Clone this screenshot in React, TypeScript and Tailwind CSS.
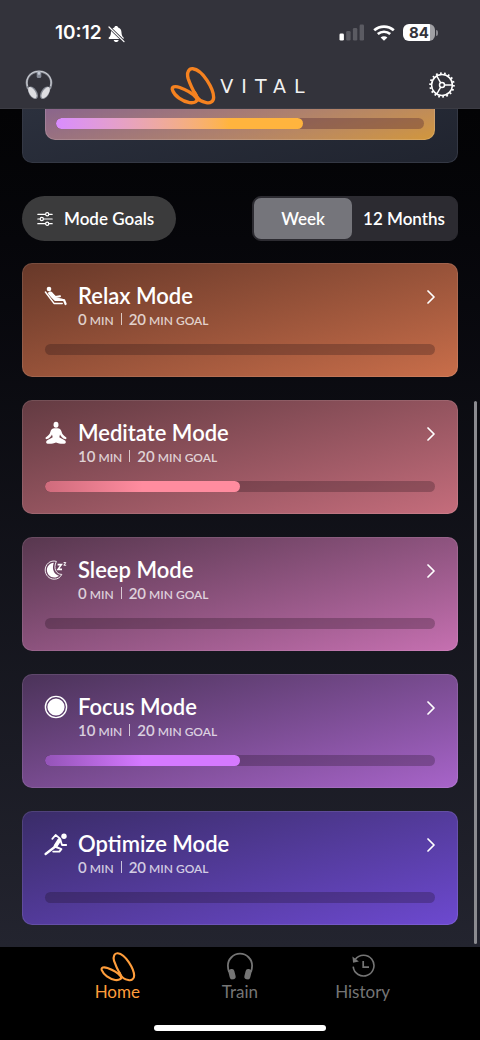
import { useState, type ReactNode } from "react";

type Mode = {
  name: string;
  minutes: number;
  goal: number;
  card: string;
  fill: string;
  icon: ReactNode;
};

function Leaves({ className, stroke }: { className: string; stroke: number }) {
  return (
    <svg viewBox="25 15 140 116" className={className} fill="none" stroke="currentColor" strokeWidth={stroke} aria-hidden="true">
      <path d="M82 52C77 34 84 22 96 23C126 26 158 84 158 108C158 121 148 127 136 124C124 122 112 115 106 104C97 88 88 70 82 52Z" />
      <path d="M36 88C30 76 44 74 57 79C76 86 96 97 106 109C114 119 102 126 86 124C64 120 42 104 36 88Z" />
      <path d="M100 92C108 103 112 110 108 120" />
    </svg>
  );
}

function BellOff() {
  return (
    <svg viewBox="0 0 17 18" className="h-[18px] w-[17px]" aria-hidden="true">
      <path d="M8.2 1C9.4 1 10 1.7 10.1 2.5C12.4 3.2 13.4 5 13.5 7.4C13.6 10 14.3 11.2 15.6 12.6C16 13.3 15.7 14 15 14H1.4C.7 14 .4 13.3.8 12.6C2.2 11.2 2.8 10 2.9 7.4C3 5 4 3.2 6.3 2.5C6.4 1.7 7 1 8.2 1Z" fill="#fff" />
      <path d="M5.7 15H10.7C10.3 16.4 9.4 17 8.2 17C7 17 6.1 16.4 5.7 15Z" fill="#fff" />
      <path d="M1 2L16 16.6" stroke="#33333b" strokeWidth="2.8" />
      <path d="M1 2L16 16.6" stroke="#fff" strokeWidth="1.3" strokeLinecap="round" />
    </svg>
  );
}

function Signal() {
  return (
    <svg viewBox="0 0 26 17" className="h-[17px] w-[26px]" fill="#5b5b62" aria-hidden="true">
      <rect x="0.5" y="9.5" width="4.4" height="7" rx="1.3" fill="#fff" />
      <rect x="7.2" y="7" width="4.4" height="9.5" rx="1.3" />
      <rect x="13.9" y="4" width="4.4" height="12.5" rx="1.3" />
      <rect x="20.6" y="0.6" width="4.4" height="15.9" rx="1.3" />
    </svg>
  );
}

function Wifi() {
  return (
    <svg viewBox="0 0 22 16" className="h-4 w-[22px]" fill="none" stroke="#fff" strokeWidth="2.7" aria-hidden="true">
      <path d="M1.2 5.2C6.8 .3 15.2 .3 20.8 5.2" />
      <path d="M4.8 9C8.4 6 13.6 6 17.2 9" />
      <path d="M11 15.8L7.6 12.4C9.5 10.7 12.5 10.7 14.4 12.4Z" fill="#fff" stroke="none" />
    </svg>
  );
}

function Headset() {
  return (
    <svg viewBox="0 0 28 30" className="h-[30px] w-7" fill="none" aria-hidden="true">
      <path d="M3.2 19C-.8 10 4.2 1.7 14 1.7C23.8 1.7 28.8 10 24.8 19" stroke="#8d9099" strokeWidth="2.2" />
      <path d="M2.4 16C0 9 5 1.2 14 1.2C23 1.2 28 9 25.6 16" stroke="#d5d7dc" strokeWidth="0.9" />
      <rect x="11.7" y="1.4" width="4.6" height="6.6" rx="1.6" fill="#858a96" />
      <rect x="12.7" y="1.4" width="2.6" height="3.4" rx="1" fill="#c3c8d3" />
      <ellipse cx="8" cy="22.8" rx="4" ry="7" transform="rotate(-32 8 22.8)" fill="#868a94" />
      <ellipse cx="7.4" cy="22.6" rx="3" ry="6.4" transform="rotate(-32 7.4 22.6)" fill="#dedee2" />
      <ellipse cx="20" cy="22.8" rx="4" ry="7" transform="rotate(32 20 22.8)" fill="#868a94" />
      <ellipse cx="20.6" cy="22.6" rx="3" ry="6.4" transform="rotate(32 20.6 22.6)" fill="#dedee2" />
    </svg>
  );
}

function Gear() {
  return (
    <svg viewBox="0 0 26 26" className="size-[26px]" fill="none" stroke="#fff" aria-hidden="true">
      <circle cx="13" cy="13" r="10.4" strokeWidth="1.5" />
      <circle cx="13" cy="13" r="11.8" strokeWidth="2" pathLength="54" strokeDasharray="1.3 1.7" />
      <circle cx="13" cy="13" r="2.5" strokeWidth="1.5" />
      <path d="M15.5 13H23.4M11.7 10.8L7.8 4M11.7 15.2L7.8 22" strokeWidth="1.5" />
    </svg>
  );
}

function Sliders() {
  return (
    <svg viewBox="0 0 16 14" className="h-3.5 w-4" fill="none" stroke="#fff" strokeWidth="1.2" strokeLinecap="round" aria-hidden="true">
      <path d="M.8 2.3H8.4M12 2.3H15.2M.8 7H3M6.6 7H15.2M.8 11.7H8.4M12 11.7H15.2" />
      <circle cx="10.2" cy="2.3" r="1.6" />
      <circle cx="4.8" cy="7" r="1.6" />
      <circle cx="10.2" cy="11.7" r="1.6" />
    </svg>
  );
}

function Chevron() {
  return (
    <svg viewBox="0 0 8 14" className="h-3.5 w-2" fill="none" stroke="#fff" strokeWidth="1.7" strokeLinecap="round" strokeLinejoin="round" aria-hidden="true">
      <path d="M1 1L7 7L1 13" />
    </svg>
  );
}

const reclining = (
  <svg viewBox="0 0 24 24" className="size-6" fill="none" stroke="#fff" strokeLinecap="round" strokeLinejoin="round" aria-hidden="true">
    <circle cx="5" cy="5" r="2.3" fill="#fff" stroke="none" />
    <path d="M1.4 8L10 19.4H18.2" strokeWidth="1.5" />
    <path d="M5.2 9.4L11.4 16H20L21.6 20" strokeWidth="2.2" />
    <path d="M7.4 9.4L11.4 13L16 12.2" strokeWidth="2" />
    <path d="M4.4 8.8C5 7 7.4 7.2 8.8 9L12.4 13.4L19 14.8L12 17C8.6 15 5.6 12 4.4 8.8Z" fill="#fff" stroke="none" />
  </svg>
);

const lotus = (
  <svg viewBox="0 0 24 24" className="size-6" fill="#fff" aria-hidden="true">
    <ellipse cx="12" cy="3.7" rx="2.5" ry="3" />
    <path d="M10.6 7.2H13.4C16 7.5 17 8.5 17.5 10.5C18.2 13.4 19.6 14.6 22 16.2C23 17 22.3 18.5 21 18.1C18.6 17.2 17 15.6 16 13.4L15.3 16.3C17.6 17.8 19.6 18.4 21 19.5C22.6 21 21.8 22.8 19.6 22.8C16.8 22.9 14 22.6 12 21.5C10 22.6 7.2 22.9 4.4 22.8C2.2 22.8 1.4 21 3 19.5C4.4 18.4 6.4 17.8 8.7 16.3L8 13.4C7 15.6 5.4 17.2 3 18.1C1.7 18.5 1 17 2 16.2C4.4 14.6 5.8 13.4 6.5 10.5C7 8.5 8 7.5 10.6 7.2Z" />
  </svg>
);

const moon = (
  <svg viewBox="0 0 24 24" className="size-6" fill="none" stroke="#fff" aria-hidden="true">
    <path d="M12.4 3.4C6 1.6 1.2 6.6 1.2 12C1.2 17 5.2 21.2 10.2 21.2C13.6 21.2 16.4 19.4 17.8 16.4C12.4 16.6 8.8 10.6 12.4 3.4Z" strokeWidth="0.9" />
    <path d="M9.8 4.8C5.6 5.4 2.9 8.4 2.9 12C2.9 16 6.2 19.5 10.2 19.5C12.2 19.5 13.8 18.9 15 17.7C10 16.4 7.6 11 9.8 4.8Z" fill="#fff" stroke="none" />
    <path d="M13.6 6.6H17.4L14 11.4H18" strokeWidth="1.6" />
    <path d="M19.6 4.6H21.8L19.8 7.2H22.2" strokeWidth="1" />
  </svg>
);

const target = (
  <svg viewBox="0 0 24 24" className="size-6" aria-hidden="true">
    <circle cx="12" cy="12" r="10.6" fill="none" stroke="#fff" strokeWidth="1.4" />
    <circle cx="12" cy="12" r="8.6" fill="#fff" />
  </svg>
);

const runner = (
  <svg viewBox="0 0 24 24" className="size-6" fill="none" stroke="#fff" strokeLinecap="round" strokeLinejoin="round" aria-hidden="true">
    <circle cx="20" cy="4.2" r="2.7" fill="#fff" stroke="none" />
    <path d="M1.6 22L12 14" strokeWidth="2.3" />
    <path d="M11.6 14L15.4 8" strokeWidth="4" />
    <path d="M8.3 6.8L11.6 3L15.8 6.4" strokeWidth="1.8" />
    <path d="M16.6 8.6L18 13H22.2" strokeWidth="1.8" />
    <path d="M12 15L17.4 17.2L15.4 19.6H9.2" strokeWidth="1.9" />
  </svg>
);

const modes: Mode[] = [
  { name: "Relax Mode", minutes: 0, goal: 20, card: "from-[#673829] to-[#c96e4a]", fill: "", icon: reclining },
  { name: "Meditate Mode", minutes: 10, goal: 20, card: "from-[#633b42] to-[#c56d7c]", fill: "from-[#cf6b7c] to-[#ff8c9f]", icon: lotus },
  { name: "Sleep Mode", minutes: 0, goal: 20, card: "from-[#57374e] to-[#c670b1]", fill: "", icon: moon },
  { name: "Focus Mode", minutes: 10, goal: 20, card: "from-[#4b3359] to-[#a864ca]", fill: "from-[#9454b8] to-[#d579ff]", icon: target },
  { name: "Optimize Mode", minutes: 0, goal: 20, card: "from-[#3a2c68] to-[#6d49d0]", fill: "", icon: runner },
];

function ModeCard({ mode }: { mode: Mode }) {
  return (
    <a href="#mode" className={`flex h-[114px] flex-col rounded-[10px] border border-white/10 bg-linear-165 bg-origin-border px-[22px] pt-[18px] ${mode.card}`}>
      <div className="flex items-start">
        <span className="mt-0.5 -ml-px">{mode.icon}</span>
        <div className="ml-2.5 flex-1">
          <h2 className="text-[22px] leading-7 font-semibold">{mode.name}</h2>
          <p className="flex items-baseline text-xs leading-[18px] font-semibold text-white/75">
            <span className="text-[15px] leading-[18px]">{mode.minutes}</span>
            <span className="ml-[3px]">MIN</span>
            <span className="mx-[7px] h-3 w-px bg-white/70" />
            <span className="text-[15px] leading-[18px]">{mode.goal}</span>
            <span className="ml-[3px]">MIN GOAL</span>
          </p>
        </div>
        <span className="mt-2">
          <Chevron />
        </span>
      </div>
      <div className="mt-3.5 h-[11px] overflow-hidden rounded-full bg-[#14060f]/25" role="progressbar" aria-label={mode.name} aria-valuenow={mode.minutes} aria-valuemax={mode.goal}>
        <div className={`h-full rounded-full bg-linear-to-r to-50% ${mode.fill}`} style={{ width: `${(mode.minutes / mode.goal) * 100}%` }} />
      </div>
    </a>
  );
}

function Header() {
  return (
    <header className="border-b border-[#3c3c44] bg-[#33333b] pb-px">
      <div className="flex h-[63px] items-center justify-between pt-0.5 pr-[42px] pl-[55px]">
        <div className="flex items-center gap-1.5 pt-0.5 font-['Inter',sans-serif] text-[19px] font-semibold">
          <time>10:12</time>
          <BellOff />
        </div>
        <div className="flex items-center gap-2">
          <Signal />
          <Wifi />
          <div className="flex items-center gap-px">
            <span className="flex h-[17px] w-8 items-center justify-center rounded-md bg-linear-to-r from-white from-84% to-[#a0a0a4] to-84% font-['Inter',sans-serif] text-[15px] leading-none font-bold text-[#33333b]">84</span>
            <span className="h-1.5 w-0.5 rounded-r-full bg-[#88888e]" />
          </div>
        </div>
      </div>
      <div className="grid h-11 grid-cols-[1fr_auto_1fr] items-center px-[25px]">
        <button type="button" aria-label="Headset" className="justify-self-start">
          <Headset />
        </button>
        <div className="flex items-center gap-1 pl-0.5 text-[#f58220]">
          <Leaves className="h-[39px] w-[47px]" stroke={10} />
          <span className="pt-0.5 font-['DejaVu_Sans',sans-serif] text-[19px] leading-none font-normal tracking-[8px] text-[#f0f0f0]">VITAL</span>
        </div>
        <button type="button" aria-label="Settings" className="justify-self-end">
          <Gear />
        </button>
      </div>
    </header>
  );
}

const tabs = [
  { name: "Home", icon: <Leaves className="h-[31px] w-[37px]" stroke={8} /> },
  {
    name: "Train",
    icon: (
      <svg viewBox="0 0 28 28" className="size-7" fill="none" stroke="currentColor" aria-hidden="true">
        <path d="M3 20C2 17 1.9 15.6 1.9 13.8A12.1 12.1 0 0 1 26.1 13.8C26.1 15.6 26 17 25 20" strokeWidth="1.8" />
        <rect x="3" y="17" width="6" height="10.4" rx="2.6" transform="rotate(-14 6 22)" fill="currentColor" stroke="none" />
        <rect x="19" y="17" width="6" height="10.4" rx="2.6" transform="rotate(14 22 22)" fill="currentColor" stroke="none" />
      </svg>
    ),
  },
  {
    name: "History",
    icon: (
      <svg viewBox="0 0 24 24" className="size-6" fill="none" stroke="currentColor" aria-hidden="true">
        <path d="M4.2 5.4A10.4 10.4 0 1 1 2.2 12.6" strokeWidth="1.6" />
        <path d="M1.4 2.4L2.1 8.7L7.9 7.4Z" fill="currentColor" stroke="none" />
        <path d="M12.2 7V13.2H18" strokeWidth="1.7" />
      </svg>
    ),
  },
];

export default function App() {
  const [range, setRange] = useState("Week");
  return (
    <div className="relative flex min-h-screen flex-col bg-black font-['Lato',sans-serif] text-white">
      <Header />
      <main className="flex-1 bg-linear-to-b from-[#030305] to-[#23242f] px-[22px] pb-[22px]">
        <section className="rounded-b-[10px] border border-t-0 border-[#343844] bg-linear-165 from-[#2b303d] to-[#20242f] px-[22px] pb-[22px]">
          <div className="rounded-b-[10px] border border-t-0 border-white/15 bg-linear-165 from-[#8a658c] to-[#d2973a] bg-origin-border px-2.5 pt-[9px] pb-2.5">
            <div className="h-[11px] overflow-hidden rounded-full bg-[#4a2030]/35" role="progressbar" aria-label="Total" aria-valuenow={67}>
              <div className="h-full w-[67%] rounded-full bg-linear-to-r from-[#d98cff] to-[#ffb43e] to-70%" />
            </div>
          </div>
        </section>
        <div className="mt-[33px] flex items-center justify-between">
          <button type="button" className="flex h-[45px] items-center gap-[11px] rounded-full bg-[#3b3b3c] px-[15px] pr-[22px] text-[17px] font-semibold">
            <Sliders />
            Mode Goals
          </button>
          <div className="flex h-[45px] rounded-[9px] border border-[#2c2b31] bg-[#2c2b31] p-px text-[17px] font-semibold">
            {["Week", "12 Months"].map((name) => (
              <button
                key={name}
                type="button"
                aria-pressed={range === name}
                onClick={() => setRange(name)}
                className={`rounded-[7px] ${name === "Week" ? "w-[98px]" : "w-[104px]"} ${range === name ? "bg-[#75757b]" : ""}`}
              >
                {name}
              </button>
            ))}
          </div>
        </div>
        <div className="mt-[22px] flex flex-col gap-[23px]">
          {modes.map((mode) => (
            <ModeCard key={mode.name} mode={mode} />
          ))}
        </div>
      </main>
      <footer className="bg-black px-14 pt-[3px] pb-[9px]">
        <nav className="grid grid-cols-3">
          {tabs.map((tab, i) => (
            <a key={tab.name} href="#tab" className={`flex flex-col items-center text-[17px] leading-5 ${i === 0 ? "text-[#ff9d3b]" : "text-[#757575]"}`}>
              <span className="flex h-8 items-center">{tab.icon}</span>
              {tab.name}
            </a>
          ))}
        </nav>
        <div className="mx-auto mt-[23px] h-1.5 w-[172px] rounded-full bg-white" />
      </footer>
      <div className="absolute right-[3px] bottom-24 h-[543px] w-[3px] rounded-full bg-[#8b8b90]" />
    </div>
  );
}
